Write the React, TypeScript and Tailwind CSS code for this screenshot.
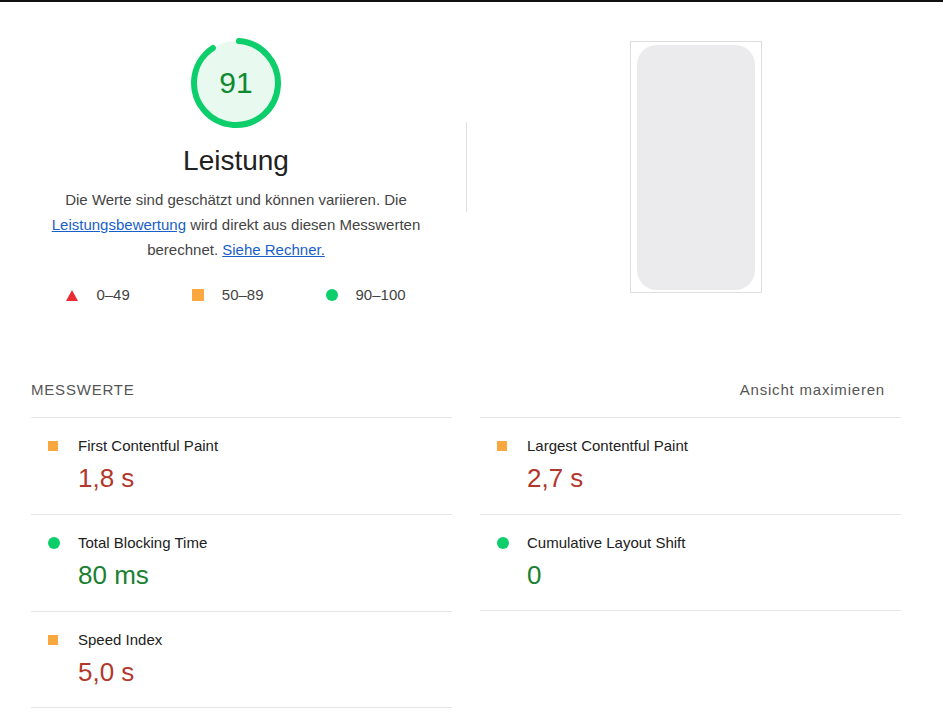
import React from "react";

const RED = "text-[#b3372b]";
const GREEN = "text-[#1b7f31]";

function Icon({ kind }: { kind: "square" | "circle" }) {
  if (kind === "square") return <span className="block w-[10px] h-[10px] bg-[#f9a73e]" />;
  return <span className="block w-[12px] h-[12px] rounded-full bg-[#0cce6b]" />;
}

function Metric({
  title,
  value,
  kind,
  good,
  extra,
}: {
  title: string;
  value: string;
  kind: "square" | "circle";
  good: boolean;
  extra?: string;
}) {
  return (
    <div className={`border-t border-[#e6e6e6] h-[97px] pt-[18px] ${extra ?? ""}`}>
      <div className="flex items-center h-[20px]">
        <div className="w-[47px] pl-[17px] flex items-center">
          <Icon kind={kind} />
        </div>
        <span className="text-[15px] text-[#212121] leading-[20px]">{title}</span>
      </div>
      <div className={`pl-[47px] mt-[7px] text-[26px] leading-[30px] ${good ? GREEN : RED}`}>{value}</div>
    </div>
  );
}

function Gauge() {
  const r = 42;
  const c = 2 * Math.PI * r;
  const pct = 0.91;
  return (
    <svg width="96" height="96" viewBox="0 0 96 96">
      <circle cx="48" cy="48" r={r} fill="#e8faef" />
      <circle
        cx="48"
        cy="48"
        r={r}
        fill="none"
        stroke="#0cce6b"
        strokeWidth="6"
        strokeLinecap="round"
        strokeDasharray={`${c * pct - 4} ${c}`}
        transform="rotate(-86 48 48)"
      />
      <text
        x="48"
        y="58"
        textAnchor="middle"
        fontSize="30"
        fill="#108a30"
        fontFamily="Liberation Sans, Arial, sans-serif"
      >
        91
      </text>
    </svg>
  );
}

export default function App() {
  return (
    <div
      className="min-h-[716px] bg-white border-t-2 border-[#111]"
      style={{ fontFamily: '"Liberation Sans", Arial, sans-serif' }}
    >
      <div className="flex h-[378px]">
        <div className="w-[410px] ml-[31px] flex flex-col items-center pt-[33px]">
          <Gauge />
          <div className="mt-[14px] text-[28px] leading-[32px] text-[#212121]">Leistung</div>
          <p className="mt-[10px] text-[15px] leading-[25px] text-[#444] text-center">
            Die Werte sind geschätzt und können variieren. Die
            <br />
            <a className="text-[#1a5fc7] underline">Leistungsbewertung</a> wird direkt aus diesen Messwerten
            <br />
            berechnet. <a className="text-[#1a5fc7] underline">Siehe Rechner.</a>
          </p>
          <div className="mt-[23px] flex items-center gap-[62px] text-[15px] text-[#444] leading-[20px]">
            <div className="flex items-center gap-[18px]">
              <svg width="12" height="11" viewBox="0 0 12 11">
                <polygon points="6,0 12,11 0,11" fill="#eb2b34" />
              </svg>
              <span>0–49</span>
            </div>
            <div className="flex items-center gap-[18px]">
              <span className="block w-[12px] h-[12px] bg-[#f9a73e]" />
              <span>50–89</span>
            </div>
            <div className="flex items-center gap-[18px]">
              <span className="block w-[12px] h-[12px] rounded-full bg-[#0cce6b]" />
              <span>90–100</span>
            </div>
          </div>
        </div>
        <div className="ml-[25px] mt-[120px] w-px h-[90px] bg-[#e0e0e0]" />
        <div className="ml-[163px] mt-[39px]">
          <div className="w-[132px] h-[252px] border border-[#dedede] p-[6px] pt-[3px] pb-[2px]">
            <div className="w-full h-full rounded-[20px] bg-[#ebebee]" />
          </div>
        </div>
      </div>
      <div className="ml-[31px] w-[869px]">
        <div className="flex justify-between h-[37px] text-[15px] leading-[20px] text-[#555] tracking-[0.8px]">
          <span>MESSWERTE</span>
          <span className="pr-[15px]">Ansicht maximieren</span>
        </div>
        <div className="grid grid-cols-[421px_421px] gap-x-[28px]">
          <Metric title="First Contentful Paint" value="1,8 s" kind="square" good={false} />
          <Metric title="Largest Contentful Paint" value="2,7 s" kind="square" good={false} />
          <Metric title="Total Blocking Time" value="80 ms" kind="circle" good />
          <Metric title="Cumulative Layout Shift" value="0" kind="circle" good extra="border-b" />
          <Metric title="Speed Index" value="5,0 s" kind="square" good={false} extra="border-b" />
        </div>
      </div>
    </div>
  );
}
